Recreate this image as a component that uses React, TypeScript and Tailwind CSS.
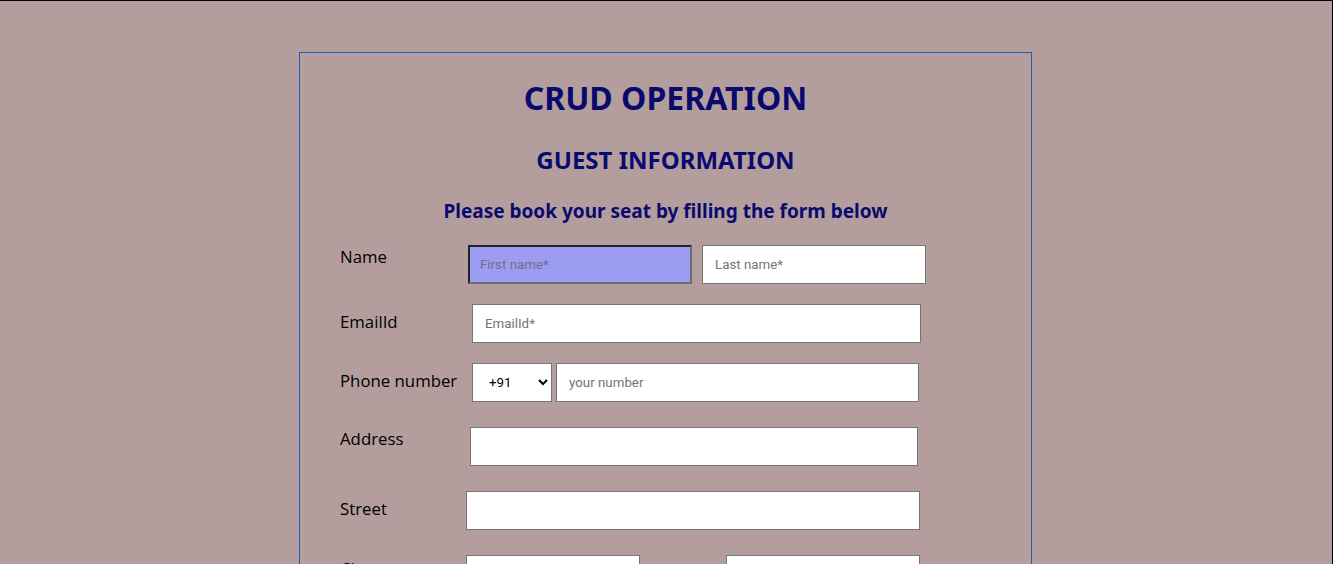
import React from 'react';

const inputBase =
  "h-[39px] bg-white border border-[#767676] px-3 text-[13.33px] font-['Roboto',sans-serif] text-black placeholder:text-[#757575] outline-none";

const App: React.FC = () => {
  return (
    <div className="min-h-[564px] bg-[#b39e9d] border-t border-r border-black font-['Open_Sans',sans-serif]">
      <div className="pt-[51px] pb-10">
        {/* Form box */}
        <div className="ml-[299px] w-[733px] border border-[#1f5fbf] pt-[21px] pl-10 pb-16 text-[#0a0a6e]">
          <h1 className="text-center text-[32px] leading-[48px] font-bold font-['Noto_Sans',sans-serif] -ml-10">
            CRUD OPERATION
          </h1>
          <h2 className="mt-5 text-center text-[24px] leading-9 font-bold font-['Noto_Sans',sans-serif] -ml-10">
            GUEST INFORMATION
          </h2>
          <h3 className="mt-5 text-center text-[19px] leading-[27px] font-bold font-['Noto_Sans',sans-serif] -ml-10">
            Please book your seat by filling the form below
          </h3>

          <div className="mt-5 flex flex-col text-[16.8px] text-black">
            {/* Name */}
            <div className="flex items-start">
              <label className="w-[128px] leading-6">Name</label>
              <input
                className="h-[39px] w-[224px] bg-[#9c9cf0] border-2 border-t-[#222] border-l-[#222] border-b-[#6e6e6e] border-r-[#6e6e6e] px-[10px] text-[13.33px] font-['Roboto',sans-serif] placeholder:text-[#6f6f8f] outline-none"
                placeholder="First name*"
              />
              <input className={`${inputBase} ml-[10px] w-[224px]`} placeholder="Last name*" />
            </div>

            {/* Email */}
            <div className="mt-5 flex items-center">
              <label className="w-[132px] leading-6 -mt-1">EmailId</label>
              <input className={`${inputBase} w-[449px]`} placeholder="EmailId*" />
            </div>

            {/* Phone */}
            <div className="mt-5 flex items-center">
              <label className="w-[132px] leading-6 -mt-1">Phone number</label>
              <select className="h-[39px] w-[80px] bg-white border border-[#767676] pl-3 text-[13.33px] font-['Roboto',sans-serif] text-black">
                <option>+91</option>
                <option>+1</option>
                <option>+44</option>
              </select>
              <input className={`${inputBase} ml-1 w-[363px]`} placeholder="your number" />
            </div>

            {/* Address */}
            <div className="mt-[25px] flex items-start">
              <label className="w-[130px] leading-6">Address</label>
              <input className={`${inputBase} w-[448px]`} />
            </div>

            {/* Street */}
            <div className="mt-[25px] flex items-center">
              <label className="w-[126px] leading-6 -mt-1">Street</label>
              <input className={`${inputBase} w-[454px]`} />
            </div>

            {/* City */}
            <div className="mt-[25px] flex items-start">
              <label className="w-[126px] pt-[2px] leading-6">City</label>
              <input className={`${inputBase} w-[174px]`} />
              <input className={`${inputBase} ml-[86px] w-[194px]`} />
            </div>
          </div>
        </div>
      </div>
    </div>
  );
};

export default App;
